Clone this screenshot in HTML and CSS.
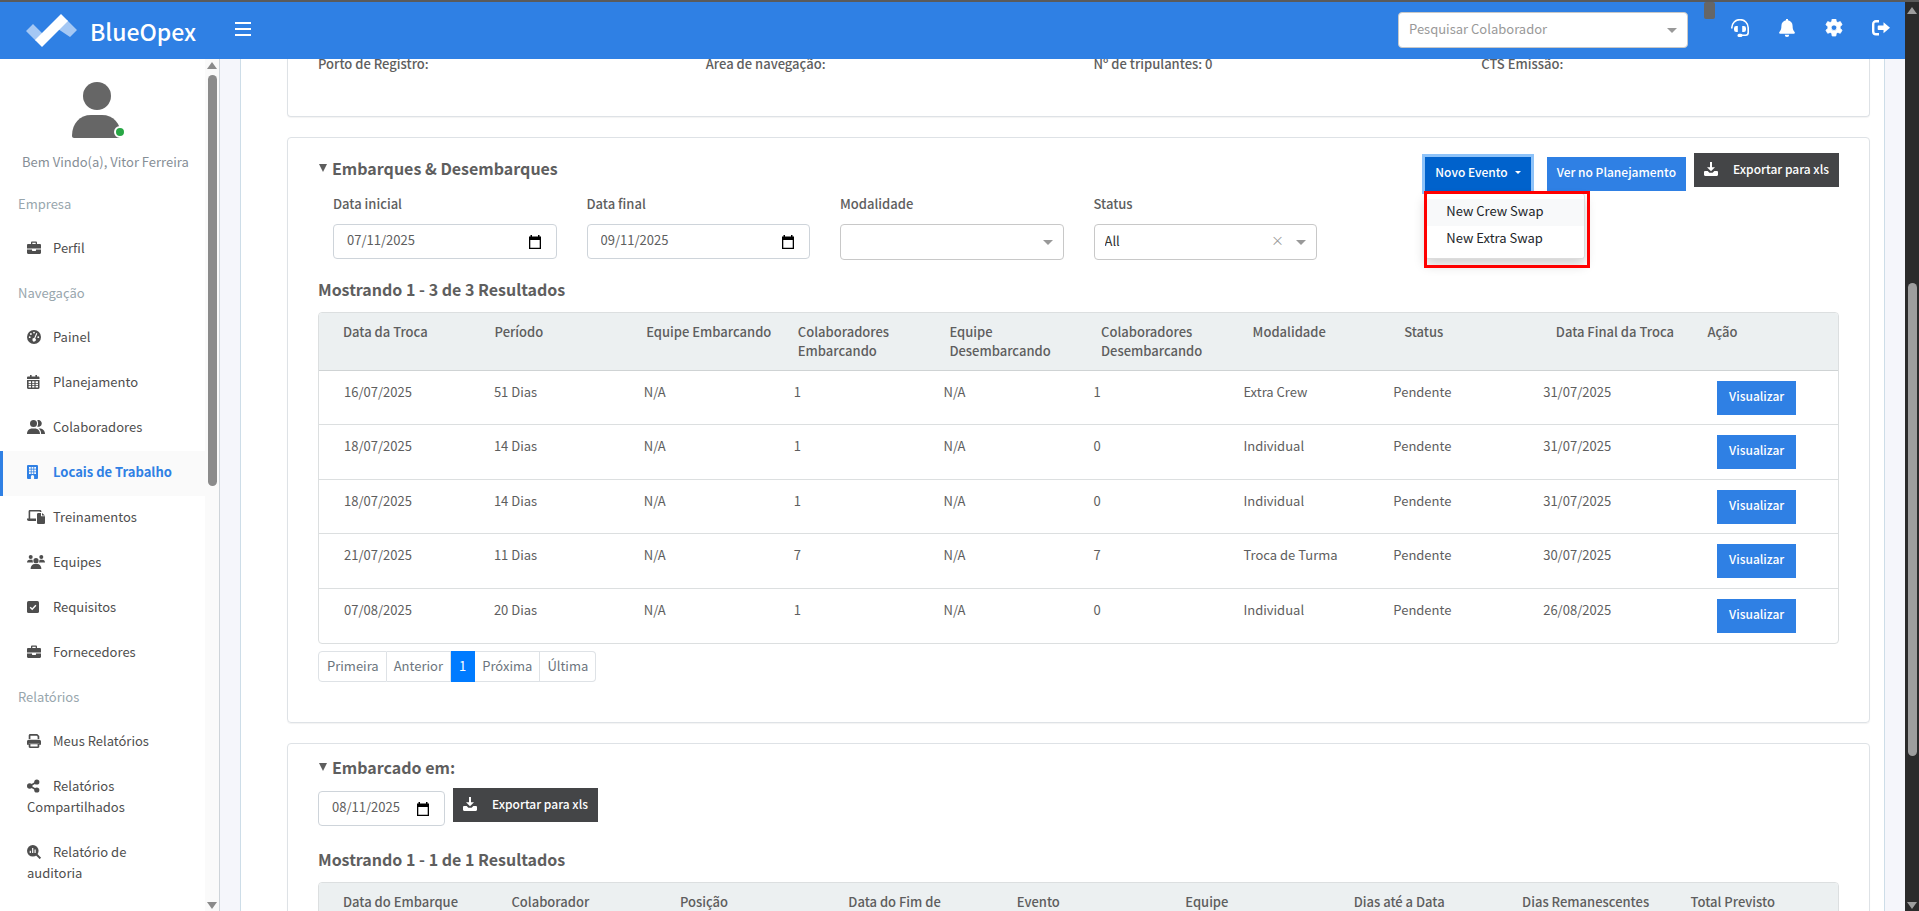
FILE: index.html
```html
<!DOCTYPE html>
<html lang="pt-BR">
<head>
    <meta charset="UTF-8">
    <meta name="viewport" content="width=device-width, initial-scale=1.0">
    <title>BlueOpex</title>
    <link rel="stylesheet" href="styles.css">
</head>
<body>
<!-- icons used by the menu, the top bar and the buttons -->
<svg class="sprite" aria-hidden="true">
    <symbol id="i-briefcase" viewBox="0 0 14 14" preserveAspectRatio="xMinYMid"><path d="M4 3V1.600C4 .9 4.500.5 5.100.5h3.800c.6 0 1.100.4 1.100 1.100V3h2.800c.7 0 1.200.5 1.200 1.200V7.500H0V4.200C0 3.500.5 3 1.200 3zM5.300 1.800V3h3.400V1.800zM0 8.500h5v1c0 .3.2.5.5.5h3c.3 0 .5-.2.5-.5v-1h5v3.300c0 .7-.5 1.200-1.200 1.200H1.200C.5 13 0 12.500 0 11.800z"/></symbol>
    <symbol id="i-gauge" viewBox="0 0 14 14" preserveAspectRatio="xMinYMid"><circle cx="7" cy="7" r="7"/><g fill="#fff"><circle cx="7" cy="2.600" r=".9"/><circle cx="3.900" cy="4" r=".9"/><circle cx="2.700" cy="7.200" r=".9"/><circle cx="11.300" cy="7.200" r=".9"/><path d="M9.300 3.100l1 .4-2.100 5a1.700 1.700 0 1 1-1-.4z"/></g></symbol>
    <symbol id="i-calendar" viewBox="0 0 14 14" preserveAspectRatio="xMinYMid"><path d="M3 0h1.600v1.600h3.800V0H10v1.600h1.300c.7 0 1.200.5 1.200 1.200V4H0V2.800c0-.7.5-1.200 1.200-1.200H3zM0 4.900h12.500v7.900c0 .7-.5 1.200-1.200 1.200H1.200C.5 14 0 13.500 0 12.800zM1.600 6.300v1.600h2.400V6.300zm3.600 0v1.600h2.200V6.300zm3.400 0v1.600H11V6.300zM1.600 8.700v1.600h2.400V8.700zm3.600 0v1.600h2.200V8.700zm3.400 0v1.600H11V8.700zM1.600 11.100v1.500h2.400v-1.500zm3.600 0v1.500h2.200v-1.500zm3.400 0v1.500H11v-1.500z" fill-rule="evenodd"/></symbol>
    <symbol id="i-users" viewBox="0 0 18 14"><circle cx="6.500" cy="3.500" r="3.500"/><path d="M0 14c0-3.500 2.100-5.600 5.200-5.600h2.600C10.900 8.400 13 10.500 13 14zM11.200 0a3.400 3.400 0 1 1-1 6.600c1.200-1.600 1.200-4.500 0-6.300zM12 8.400c3.800 0 6 2 6 5.600h-3.900c.1-2.300-.7-4.200-2.600-5.500z"/></symbol>
    <symbol id="i-building" viewBox="0 0 14 14" preserveAspectRatio="xMinYMid"><path d="M1.300 0h8.400C10.500 0 11 .5 11 1.300v11.400c0 .8-.5 1.300-1.300 1.300H7.100v-2.500a1.600 1.600 0 0 0-3.200 0V14H1.300C.5 14 0 13.500 0 12.700V1.300C0 .5.500 0 1.300 0zM2 2v1.800h1.800V2zm2.600 0v1.800h1.800V2zm2.600 0v1.800H9V2zM2 4.600v1.800h1.800V4.600zm2.600 0v1.800h1.800V4.600zm2.600 0v1.800H9V4.600zM2 7.200V9h1.800V7.200zm2.600 0V9h1.800V7.200zm2.600 0V9H9V7.200z" fill-rule="evenodd"/></symbol>
    <symbol id="i-laptop" viewBox="0 0 18 14"><path d="M1.600 1.300C1.600.6 2.100 0 2.900 0H13c.8 0 1.400.6 1.400 1.300V2h-1.600v-.4H3.200v7H9V11H1.800C.8 11 0 10.400 0 9.300v-.7h1.600zM10 4.300c0-.7.6-1.300 1.300-1.300H14v3.200h4v6.500c0 .7-.6 1.300-1.300 1.300h-5.400c-.7 0-1.300-.6-1.300-1.300zM15 3l3 2.400h-3z"/></symbol>
    <symbol id="i-team" viewBox="0 0 18 14"><circle cx="3.700" cy="2" r="2"/><circle cx="14.300" cy="2" r="2"/><circle cx="9" cy="5.700" r="2.600"/><path d="M0 7.600c0-1.700 1-2.900 2.600-2.900h1.600c.6 0 1 .1 1.400.4-.2 1 0 1.800.6 2.500zM18 7.600c0-1.700-1-2.900-2.600-2.900h-1.600c-.6 0-1 .1-1.400.4.200 1 0 1.800-.6 2.500zM3.600 14c0-3 1.700-5 4.300-5h2.200c2.600 0 4.300 2 4.300 5z"/></symbol>
    <symbol id="i-check" viewBox="0 0 14 14" preserveAspectRatio="xMinYMid"><rect y="1" width="12" height="12" rx="1.600"/><path d="M3.200 7.200l2 2 3.700-4" fill="none" stroke="#fff" stroke-width="1.400"/></symbol>
    <symbol id="i-print" viewBox="0 0 14 14" preserveAspectRatio="xMinYMid"><path d="M1.700 1.500C1.700.7 2.400 0 3.200 0h7l2.100 2v3h-1.700V2.600l-.9-.9H3.400V5H1.700zM0 7.600C0 6.600.8 5.800 1.800 5.800h10.400c1 0 1.800.8 1.800 1.800v3.200h-1.700V9H1.700v1.800H0zM1.700 9.200h10.600v3.600c0 .7-.5 1.200-1.200 1.200H2.900c-.7 0-1.200-.5-1.200-1.200zm1.700 1v2.200h7.200v-2.200z" fill-rule="evenodd"/></symbol>
    <symbol id="i-share" viewBox="0 0 14 14" preserveAspectRatio="xMinYMid"><circle cx="2.700" cy="7" r="2.700"/><circle cx="9.800" cy="3" r="2.600"/><circle cx="9.800" cy="11" r="2.600"/><path d="M2.700 7l7-4M2.700 7l7 4" stroke="currentColor" stroke-width="1.600"/></symbol>
    <symbol id="i-search" viewBox="0 0 14 14" preserveAspectRatio="xMinYMid"><circle cx="5.800" cy="5.800" r="5.800"/><path d="M9 9l4.400 4.400" stroke="currentColor" stroke-width="2"/><path d="M3.300 5.800v2.200M5.700 3v5M8.100 4.500V8" stroke="#fff" stroke-width="1.200"/></symbol>
    <symbol id="i-download" viewBox="0 0 14 14"><path d="M6 0h2v5.300h3L7 9.300l-4-4h3zM1.200 9h2.500l1.700 1.800h3.200L10.300 9h2.500c.7 0 1.200.6 1.200 1.200v2.600c0 .7-.5 1.200-1.200 1.200H1.200C.5 14 0 13.500 0 12.800v-2.600C0 9.600.5 9 1.200 9z"/></symbol>
    <symbol id="i-headset" viewBox="0 0 18 18"><path d="M.8 9.500V8.800a8.200 8.200 0 0 1 16.400 0v4.700c0 1.700-1 2.700-2.700 2.700H10" fill="none" stroke="currentColor" stroke-width="1.600"/><path d="M5.200 7h1.600v6H5.200A2.200 2.200 0 0 1 3 10.800V9.200A2.200 2.200 0 0 1 5.200 7zM11.200 7h1.600A2.200 2.200 0 0 1 15 9.200v1.600a2.200 2.200 0 0 1-2.200 2.200h-1.600z"/><rect x="6.500" y="14.700" width="5" height="3.300" rx="1.600"/></symbol>
    <symbol id="i-bell" viewBox="0 0 18 18"><path d="M8 0h2v1.300c2.800.5 4.600 2.700 4.600 5.600 0 3 .6 4.500 2 6 .6.700.2 1.800-.8 1.800H2.200c-1 0-1.400-1.100-.8-1.800 1.400-1.500 2-3 2-6C3.400 4 5.200 1.800 8 1.300zM6.800 15.800h4.400A2.200 2.200 0 0 1 9 18a2.200 2.200 0 0 1-2.200-2.200z"/></symbol>
    <symbol id="i-gear" viewBox="0 0 18 18"><path d="M7.200 0h3.600l.5 2.600 1.500.9 2.500-.9 1.800 3.100-2 1.800v1.900l2 1.800-1.800 3.100-2.500-.9-1.500.9-.5 2.700H7.200l-.5-2.700-1.500-.9-2.500.9L.9 11.200l2-1.800V7.500l-2-1.800 1.800-3.100 2.500.9 1.500-.9zM9 5.900a2.800 2.800 0 1 0 0 5.600 2.800 2.800 0 0 0 0-5.600z" fill-rule="evenodd" stroke="currentColor" stroke-width=".8" stroke-linejoin="round"/></symbol>
    <symbol id="i-logout" viewBox="0 0 18 18"><path d="M7 2.200H4A2.800 2.800 0 0 0 1.200 5v7.500A2.800 2.800 0 0 0 4 15.300h3" fill="none" stroke="currentColor" stroke-width="2.400"/><path d="M11.500 3.200L18 8.800l-6.500 5.500V11H6.500c-.5 0-.8-.4-.8-.8V7.400c0-.5.300-.8.8-.8h5z"/></symbol>
</svg>

<div class="app">
    <div class="page">
        <header class="topbar">
            <a class="brand" href="#">
                <svg class="brand-mark" viewBox="0 0 51 33"><path d="M0 17l7-7 10 10-7 7zM35 7l-3 8 12 8 7-7-10-10z" fill="#a5c8f4"/><path d="M9 26L35 0l7 7-26 26z" fill="#fff"/></svg>
                <span>BlueOpex</span>
            </a>
            <button class="burger" type="button" aria-label="Menu"><i></i><i></i><i></i></button>
            <label class="select-box search">
                <select aria-label="Pesquisar Colaborador"><option>Pesquisar Colaborador</option></select>
            </label>
            <span class="phone"></span>
            <nav class="top-icons">
                <a href="#" aria-label="Suporte"><svg><use href="#i-headset"/></svg></a>
                <a href="#" aria-label="Alertas"><svg><use href="#i-bell"/></svg></a>
                <a href="#" aria-label="Ajustes"><svg><use href="#i-gear"/></svg></a>
                <a href="#" aria-label="Sair"><svg><use href="#i-logout"/></svg></a>
            </nav>
        </header>

        <div class="columns">
            <aside class="sidebar">
                <div class="menu">
                    <div class="user">
                        <div class="avatar">
                            <svg viewBox="0 0 50 56"><circle cx="25" cy="14" r="14"/><path d="M0 54c0-13 8-21 19-21h11c11 0 19 8 19 21 0 1-1 2-2 2H2c-1 0-2-1-2-2z"/></svg>
                            <span class="online"></span>
                        </div>
                        <p>Bem Vindo(a), Vitor Ferreira</p>
                    </div>
                    <h6>Empresa</h6>
                    <a href="#"><svg><use href="#i-briefcase"/></svg>Perfil</a>
                    <h6>Navegação</h6>
                    <a href="#"><svg><use href="#i-gauge"/></svg>Painel</a>
                    <a href="#"><svg><use href="#i-calendar"/></svg>Planejamento</a>
                    <a href="#"><svg><use href="#i-users"/></svg>Colaboradores</a>
                    <a href="#" class="active"><svg><use href="#i-building"/></svg>Locais de Trabalho</a>
                    <a href="#"><svg><use href="#i-laptop"/></svg>Treinamentos</a>
                    <a href="#"><svg><use href="#i-team"/></svg>Equipes</a>
                    <a href="#"><svg><use href="#i-check"/></svg>Requisitos</a>
                    <a href="#"><svg><use href="#i-briefcase"/></svg>Fornecedores</a>
                    <h6>Relatórios</h6>
                    <a href="#"><svg><use href="#i-print"/></svg>Meus Relatórios</a>
                    <a href="#"><svg><use href="#i-share"/></svg>Relatórios Compartilhados</a>
                    <a href="#"><svg><use href="#i-search"/></svg>Relatório de auditoria</a>
                </div>
                <div class="scrollbar light"><i class="up"></i><div class="track"><b></b></div><i class="down"></i></div>
            </aside>

            <main class="content">
                <section class="card card-info">
                    <span>Porto de Registro:</span>
                    <span>Área de navegação:</span>
                    <span>Nº de tripulantes: 0</span>
                    <span>CTS Emissão:</span>
                </section>

                <section class="card card-events">
                    <div class="card-head">
                        <h4><button type="button" class="toggle">Embarques &amp; Desembarques</button></h4>
                        <div class="actions">
                            <div class="dropdown">
                                <button type="button" class="btn btn-open">Novo Evento</button>
                                <div class="dropdown-menu">
                                    <a href="#" class="hover">New Crew Swap</a>
                                    <a href="#">New Extra Swap</a>
                                </div>
                                <div class="mark"></div>
                            </div>
                            <button type="button" class="btn">Ver no Planejamento</button>
                            <button type="button" class="btn btn-dark"><svg><use href="#i-download"/></svg>Exportar para xls</button>
                        </div>
                    </div>
                    <div class="filters">
                        <div>
                            <label for="start">Data inicial</label>
                            <div class="date-box"><input id="start" type="text" value="07/11/2025"><svg viewBox="0 0 12 14"><path d="M1.500 0v1.500H0V14h12V1.500h-1.500V0H9v1.500H3V0zM1.300 5h9.400v7.700H1.300z" fill-rule="evenodd"/></svg></div>
                        </div>
                        <div>
                            <label for="end">Data final</label>
                            <div class="date-box"><input id="end" type="text" value="09/11/2025"><svg viewBox="0 0 12 14"><path d="M1.500 0v1.500H0V14h12V1.500h-1.500V0H9v1.500H3V0zM1.300 5h9.400v7.700H1.300z" fill-rule="evenodd"/></svg></div>
                        </div>
                        <div>
                            <label for="mode">Modalidade</label>
                            <div class="select-box"><select id="mode"><option></option></select></div>
                        </div>
                        <div>
                            <label for="status">Status</label>
                            <div class="select-box"><select id="status"><option>All</option></select><button type="button" class="clear">×</button></div>
                        </div>
                    </div>
                    <h4 class="results">Mostrando 1 - 3 de 3 Resultados</h4>
                    <table class="grid">
                        <thead>
                            <tr><th>Data da Troca</th><th>Período</th><th>Equipe Embarcando</th><th>Colaboradores Embarcando</th><th>Equipe Desembarcando</th><th>Colaboradores Desembarcando</th><th>Modalidade</th><th>Status</th><th>Data Final da Troca</th><th>Ação</th></tr>
                        </thead>
                        <tbody>
                            <tr><td>16/07/2025</td><td>51 Dias</td><td>N/A</td><td>1</td><td>N/A</td><td>1</td><td>Extra Crew</td><td>Pendente</td><td>31/07/2025</td><td class="act"><button type="button" class="btn">Visualizar</button></td></tr>
                            <tr><td>18/07/2025</td><td>14 Dias</td><td>N/A</td><td>1</td><td>N/A</td><td>0</td><td>Individual</td><td>Pendente</td><td>31/07/2025</td><td class="act"><button type="button" class="btn">Visualizar</button></td></tr>
                            <tr><td>18/07/2025</td><td>14 Dias</td><td>N/A</td><td>1</td><td>N/A</td><td>0</td><td>Individual</td><td>Pendente</td><td>31/07/2025</td><td class="act"><button type="button" class="btn">Visualizar</button></td></tr>
                            <tr><td>21/07/2025</td><td>11 Dias</td><td>N/A</td><td>7</td><td>N/A</td><td>7</td><td>Troca de Turma</td><td>Pendente</td><td>30/07/2025</td><td class="act"><button type="button" class="btn">Visualizar</button></td></tr>
                            <tr><td>07/08/2025</td><td>20 Dias</td><td>N/A</td><td>1</td><td>N/A</td><td>0</td><td>Individual</td><td>Pendente</td><td>26/08/2025</td><td class="act"><button type="button" class="btn">Visualizar</button></td></tr>
                        </tbody>
                    </table>
                    <nav class="pagination">
                        <a href="#">Primeira</a><a href="#">Anterior</a><a href="#" class="current">1</a><a href="#">Próxima</a><a href="#">Última</a>
                    </nav>
                </section>

                <section class="card card-onboard">
                    <div class="card-head">
                        <h4><button type="button" class="toggle">Embarcado em:</button></h4>
                    </div>
                    <div class="toolbar">
                        <div class="date-box small"><input type="text" aria-label="Embarcado em" value="08/11/2025"><svg viewBox="0 0 12 14"><path d="M1.500 0v1.500H0V14h12V1.500h-1.500V0H9v1.500H3V0zM1.300 5h9.400v7.700H1.300z" fill-rule="evenodd"/></svg></div>
                        <button type="button" class="btn btn-dark"><svg><use href="#i-download"/></svg>Exportar para xls</button>
                    </div>
                    <h4 class="results">Mostrando 1 - 1 de 1 Resultados</h4>
                    <table class="grid grid-9">
                        <thead>
                            <tr><th>Data do Embarque</th><th>Colaborador</th><th>Posição</th><th>Data do Fim de</th><th>Evento</th><th>Equipe</th><th>Dias até a Data</th><th>Dias Remanescentes</th><th>Total Previsto</th></tr>
                        </thead>
                    </table>
                </section>
            </main>
        </div>
    </div>
    <div class="scrollbar dark"><i class="up"></i><div class="track"><b></b></div><i class="down"></i></div>
</div>
</body>
</html>
```

FILE: styles.css
```css
*{box-sizing: border-box;}
body{margin: 0;font: 13px/21px "Noto Sans CJK SC", "Noto Sans", sans-serif;color: #5e5e5e;}
h4,h6,p{margin: 0;}
a{color: inherit;text-decoration: none;}
button,input,select{font: inherit;color: inherit;}
svg{fill: currentColor;}
.sprite{display: none;}

.app{display: flex;height: 100vh;overflow: hidden;border-top: 2px solid #5a5a5a;}
.page{flex: 1;min-width: 0;display: flex;flex-direction: column;}
.columns{flex: 1;min-height: 0;display: flex;background: #f5f6fb;}

/* top bar */
.topbar{display: flex;align-items: flex-start;height: 57px;flex-shrink: 0;padding-right: 15px;background: #2f80e4;color: #fff;}
.brand{display: flex;gap: 13px;width: 235px;padding: 12px 0 0 26px;font-size: 23px;line-height: 34px;font-weight: 500;}
.brand-mark{width: 51px;height: 33px;}
.burger{display: flex;flex-direction: column;gap: 4px;margin: 20px auto 0 0;padding: 0;border: 0;background: none;}
.burger i{width: 16px;height: 2px;background: #fff;}
.search{width: 290px;margin-top: 10px;color: #999;}
.phone{width: 11px;height: 17px;margin: 0 16px;border-radius: 2px;background: #666;}
.top-icons{display: flex;gap: 29px;padding-top: 17px;}
.top-icons svg{display: block;width: 18px;height: 18px;}

/* sidebar */
.sidebar{display: flex;width: 220px;flex-shrink: 0;border-right: 1px solid #ced4d9;background: #fff;}
.menu{flex: 1;overflow: hidden;}
.user{padding-top: 23px;color: #868e96;}
.user p{padding: 13px 0 11px 22px;white-space: nowrap;}
.avatar{position: relative;width: 50px;height: 56px;margin-left: 72px;color: #666;}
.online{position: absolute;right: -4px;bottom: 0;width: 12px;height: 12px;border: 2px solid #fff;border-radius: 50%;background: #28a745;}
.menu h6{padding: 10px 18px 13px;font-size: 13px;font-weight: 400;color: #98a6ad;}
.menu a{display: block;padding: 10px 40px 14px 27px;color: #4e4e4e;}
.menu a svg{width: 18px;height: 14px;margin-right: 8px;vertical-align: -2px;}
.menu a.active{padding-left: 24px;border-left: 3px solid #2f80e4;padding-right: 10px;background: #fafafa;color: #2f80e4;font-weight: 700;}

/* scrollbars */
.scrollbar{display: flex;flex-direction: column;align-items: center;width: 14px;padding: 3px 0 2px;flex-shrink: 0;}
.scrollbar .track{flex: 1;width: 9px;margin: 6px 0;}
.scrollbar b{display: block;border-radius: 5px;}
.scrollbar i{border: 5px solid transparent;}
.scrollbar .up{border-top: 0;border-bottom: 7px solid;}
.scrollbar .down{border-bottom: 0;border-top: 7px solid;}
.light{background: #fafafa;color: #8b8b8b;}
.light b{height: 50%;background: #8b8b8b;}
.dark{padding-top: 5px;background: #2b2b2b;color: #9e9e9e;}
.dark .track{display: flex;flex-direction: column;}
.dark .track:before{content: "";height: 30%;}
.dark b{height: 54%;background: #9e9e9e;}

/* content */
.content{flex: 1;min-width: 0;margin: 0 20px;padding: 0 14px 0 46px;border: solid #cddde8;border-width: 0 1px;background: #fff;overflow: hidden;}
.card{margin-bottom: 20px;border: 1px solid #dee2e6;border-radius: 4px;box-shadow: 0 1px 1px rgba(0,0,0,.05);}
.card-info{display: grid;grid-template-columns: repeat(4, 1fr);padding: 0 0 47px 30px;border-top: 0;border-radius: 0 0 4px 4px;line-height: 10px;font-weight: 500;}
.card-events{padding: 15px 30px 39px;}
.card-onboard{padding: 8px 30px;}
.card-head{display: flex;justify-content: space-between;height: 40px;}
.card-onboard .card-head{height: 36px;}
.toggle{display: flex;align-items: center;gap: 5px;padding: 4px 0 4px 1px;border: 0;background: none;font-size: 16px;line-height: 22px;font-weight: 700;}
.toggle:before{content: "";border: 4px solid transparent;border-top: 8px solid #5e5e5e;border-bottom: 0;}

.btn{display: inline-block;height: 34px;padding: 0 10px;border: 0;background: #2f80e4;color: #fff;font-size: 12px;line-height: 30px;font-weight: 500;white-space: nowrap;}
.btn:not(.btn-dark){padding-bottom: 4px;}
.btn-dark{display: flex;align-items: center;gap: 15px;padding: 0 10px 2px;background: #444547;}
.btn-dark svg{width: 14px;height: 14px;}
.btn-open{background: #0062cc;box-shadow: 0 0 0 3px #8ec3f9;}
.btn-open:after{content: "";display: inline-block;margin-left: 7px;border: 3px solid transparent;border-top-color: #fff;border-bottom: 0;vertical-align: 3px;}
.actions{display: flex;align-items: flex-start;gap: 8px;}
.actions .btn{margin-top: 4px;}
.actions .btn-dark{margin-top: 0;}
.dropdown{position: relative;margin-right: 8px;}
.dropdown-menu{position: absolute;top: 40px;left: 0;width: 160px;padding: 5px 0;border: 1px solid #dcdcdc;border-radius: 3px;background: #fff;box-shadow: 0 6px 12px rgba(0,0,0,.18);color: #212529;}
.dropdown-menu a{display: block;padding: 1px 20px 5px;}
.dropdown-menu .hover{background: #f8f9fa;}
.mark{position: absolute;top: 38px;left: -1px;width: 166px;height: 77px;border: 3px solid #f00;}

.filters{display: grid;grid-template-columns: repeat(6, 1fr);}
.filters>div{padding: 0 15px;}
.filters label{display: block;margin-bottom: 10px;font-weight: 500;}
.date-box{display: flex;align-items: center;height: 35px;padding: 0 15px 0 13px;border: 1px solid #ced4da;border-radius: 4px;}
.date-box input{flex: 1;min-width: 0;padding: 0 0 4px;border: 0;background: none;}
.date-box svg{width: 12px;height: 14px;color: #000;}
.date-box.small{width: 127px;}
.select-box{display: block;position: relative;height: 36px;border: 1px solid #c8c8c8;border-radius: 4px;background: #fff;}
.select-box select{width: 100%;height: 30px;padding: 0 10px;border: 0;background: none;appearance: none;}
.select-box:after{content: "";position: absolute;right: 10px;top: 15px;border: 5px solid transparent;border-top-color: #999;border-bottom: 0;}
.filters select{color: #333;}
.clear{position: absolute;right: 32px;top: 4px;padding: 0;border: 0;background: none;color: #999;font-size: 13px;}

.results{margin: 18px 0 12px;font-size: 16px;line-height: 22px;font-weight: 700;}
.grid{display: block;border: 1px solid #dcdfe0;border-radius: 4px;overflow: hidden;}
.grid thead,.grid tbody{display: block;}
.grid tr{display: grid;grid-template-columns: repeat(10, 1fr);}
.grid-9 tr{grid-template-columns: repeat(9, 1fr);}
.grid thead tr{padding-right: 3px;border-bottom: 1px solid #cfd3d4;background: #ecf0f1;}
.grid th{padding: 9px 0 10px 24px;line-height: 19px;font-weight: 500;text-align: left;}
.grid tbody tr{height: 54px;padding: 0 11px 0 9px;border-bottom: 1px solid #dcdfe0;}
.grid tbody tr:nth-child(even){height: 55px;}
.grid tbody tr:last-child{border-bottom: 0;}
.grid td{padding: 10px 16px;}
.grid .act{padding-left: 40px;}
.grid .btn{padding: 0 12px 4px;}

.pagination{display: flex;margin-top: 7px;padding-bottom: 1px;color: #6c757d;}
.pagination a{padding: 3px 7px 5px;border: 1px solid #dee2e6;border-left: 0;}
.pagination a:first-child{padding-left: 8px;border-left: 1px solid #dee2e6;border-radius: 4px 0 0 4px;}
.pagination a:last-child{border-radius: 0 4px 4px 0;}
.pagination .current{padding: 3px 8px 5px;border-color: #007bff;background: #007bff;color: #fff;}
.toolbar{display: flex;align-items: flex-start;gap: 8px;margin-bottom: 22px;}
.toolbar .date-box{margin-top: 3px;}
```
